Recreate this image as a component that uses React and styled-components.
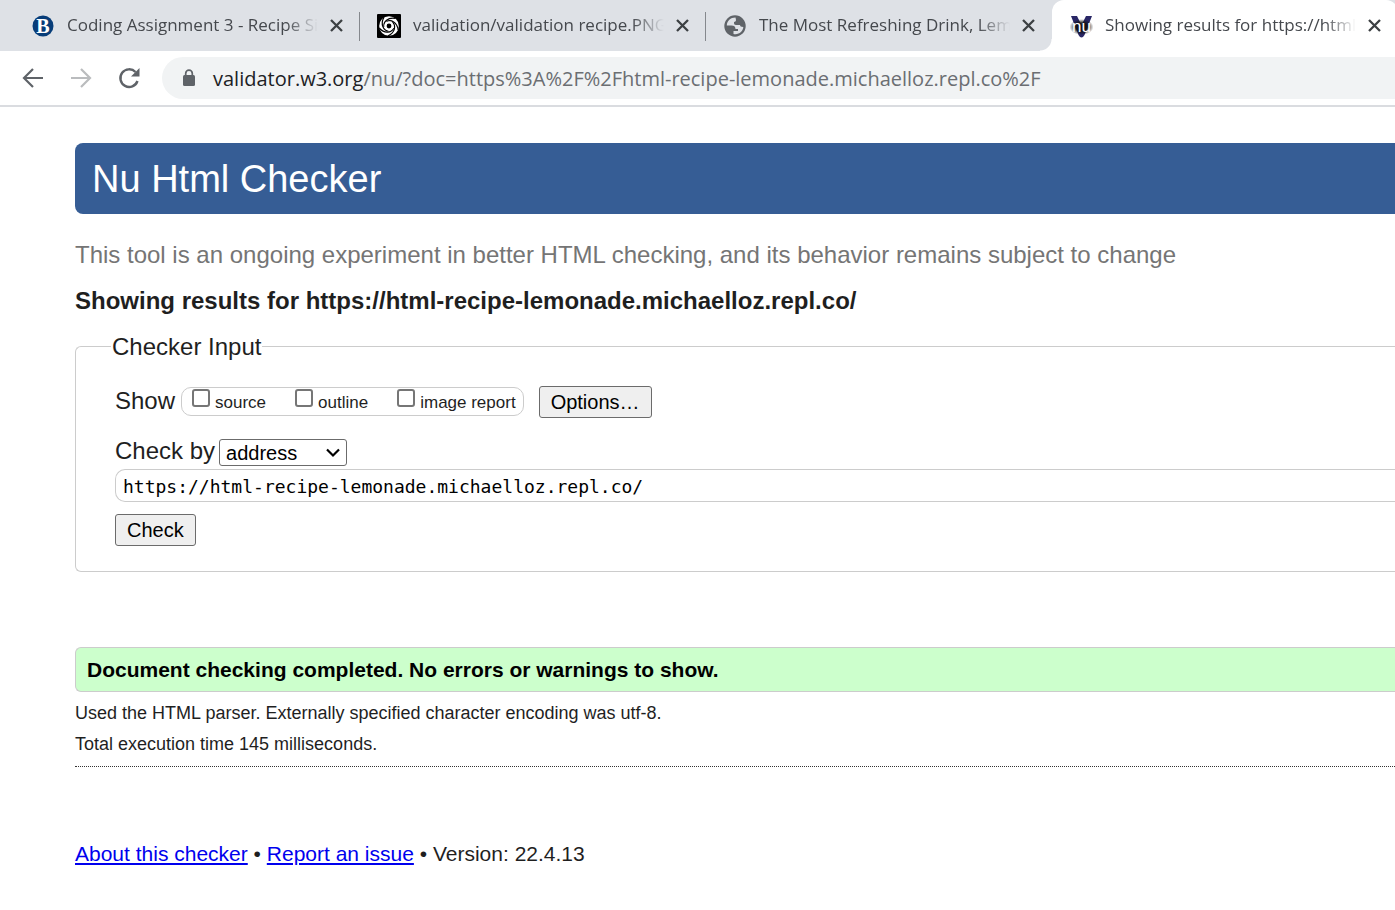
import React from "react";
import styled, { createGlobalStyle, css } from "styled-components";

const sans = `"Liberation Sans", Arial, sans-serif`;
const ui = `"Open Sans", "Noto Sans", sans-serif`;

const GlobalStyle = createGlobalStyle`
  *, *::before, *::after { box-sizing: border-box; }
  body { margin: 0; background: #fff; color: #1f1f1f; font: 24px/30px ${sans}; overflow-x: hidden; }
  h1, h2, p { margin: 0; }
`;

const TabStrip = styled.nav`
  display: flex;
  height: 51px;
  padding-left: 14px;
  background: #dee1e6;
  overflow: hidden;
`;
const Tab = styled.div`
  position: relative;
  flex: none;
  width: 346px;
  display: flex;
  align-items: center;
  padding: 0 16px 0 17px;
  ${(p) =>
    p.$separated &&
    css`
      &::after { content: ""; position: absolute; right: 0; top: 12px; width: 1px; height: 29px; background: #85888d; }
    `}
  ${(p) =>
    p.$active &&
    css`
      background: #fff;
      border-radius: 12px 12px 0 0;
      &::before {
        content: ""; position: absolute; left: -12px; bottom: 0; width: 12px; height: 12px;
        background: radial-gradient(circle at 0 0, transparent 11px, #fff 12px);
      }
    `}
`;
const Favicon = styled.svg`
  flex: none;
  width: 24px;
  height: 24px;
  margin-right: 12px;
`;
const TabTitle = styled.span`
  flex: 1;
  min-width: 0;
  padding-bottom: 2px;
  overflow: hidden;
  white-space: nowrap;
  font: 17px/28px ${ui};
  color: #45484d;
  mask-image: linear-gradient(to right, #000 calc(100% - 32px), transparent);
`;
const CloseButton = styled.button`
  display: flex;
  margin: 0 0 0 11px;
  padding: 0;
  border: 0;
  background: none;
  color: #3c4043;
`;

const Toolbar = styled.div`
  display: flex;
  align-items: center;
  height: 56px;
  padding-left: 19px;
  border-bottom: 2px solid #dadce0;
`;
const NavButton = styled.button`
  display: flex;
  flex: none;
  width: 28px;
  height: 28px;
  margin-right: 20px;
  padding: 0;
  border: 0;
  background: none;
  color: ${(p) => (p.disabled ? "#babcbe" : "#5f6368")};
  &:last-of-type { margin-right: 19px; }
`;
const AddressBar = styled.div`
  flex: 1;
  min-width: 0;
  display: flex;
  align-items: center;
  height: 42px;
  padding-left: 19px;
  border-radius: 21px 0 0 21px;
  background: #f1f3f4;
`;
const Url = styled.span`
  margin-left: 16px;
  padding-top: 2px;
  font: 20px/28px ${ui};
  white-space: nowrap;
  color: #6b6e72;
`;
const Host = styled.span`
  color: #202124;
`;

const Page = styled.main`
  padding: 36px 0 40px 75px;
`;
const Banner = styled.h1`
  padding: 15px 17px 13px;
  border-radius: 8px 0 0 8px;
  background: #365d95;
  color: #fff;
  font-size: 38px;
  font-weight: 400;
  line-height: 43px;
`;
const Intro = styled.p`
  margin-top: 26px;
  color: #757575;
`;
const ResultsFor = styled.h2`
  margin-top: 16px;
  font-size: 24px;
  line-height: 30px;
`;
const InputPanel = styled.fieldset`
  min-width: 0;
  margin: 16px 0 0;
  padding: 25px 0 25px 39px;
  border: 1px solid #ccc;
  border-right: 0;
  border-radius: 6px 0 0 6px;
`;
const Legend = styled.legend`
  margin-left: -4px;
  padding: 0 1px;
  line-height: 29px;
`;
const ShowRow = styled.div`
  display: flex;
  align-items: flex-start;
`;
const ShowOptions = styled.div`
  display: flex;
  gap: 29px;
  height: 29px;
  margin: 1px 15px 0 6px;
  padding: 0 7px 0 10px;
  border: 1px solid #ccc;
  border-radius: 10px;
`;
const Option = styled.label`
  display: flex;
  gap: 5px;
  font-size: 17px;
  line-height: 29px;
`;
const Checkbox = styled.input`
  appearance: none;
  width: 18px;
  height: 18px;
  margin: 1px 0 0;
  border: 2px solid #767676;
  border-radius: 3px;
  background: #fff;
`;
const Button = styled.button`
  height: 32px;
  padding: 0 11px;
  border: 1px solid #6b6b6b;
  border-radius: 3px;
  background: #efefef;
  color: #000;
  font: 20px/28px ${sans};
`;
const MethodRow = styled.div`
  display: flex;
  align-items: flex-end;
  margin-top: 18px;
`;
const SelectWrap = styled.span`
  position: relative;
  display: flex;
  margin-left: 4px;
`;
const Select = styled.select`
  appearance: none;
  width: 128px;
  height: 27px;
  padding: 0 6px;
  border: 1px solid #6b6b6b;
  border-radius: 3px;
  background: #fff;
  color: #000;
  font: 20px/24px ${sans};
`;
const Chevron = styled.svg`
  position: absolute;
  right: 7px;
  top: 9px;
  pointer-events: none;
`;
const AddressInput = styled.input`
  display: block;
  width: 100%;
  height: 33px;
  margin: 3px 0 12px;
  padding: 2px 7px 0;
  border: 1px solid #ccc;
  border-right: 0;
  border-radius: 10px 0 0 10px;
  color: #000;
  font: 18px/28px "DejaVu Sans Mono", monospace;
`;
const Success = styled.p`
  margin-top: 75px;
  padding: 8px 11px 7px;
  border: 1px solid #ccc;
  border-right: 0;
  border-radius: 6px 0 0 6px;
  background: #cfc;
  color: #000;
  font-size: 21px;
  font-weight: 700;
  line-height: 28px;
`;
const Details = styled.div`
  padding: 6px 0;
  border-bottom: 1px dotted #333;
  font-size: 18px;
  line-height: 31px;
`;
const Footer = styled.footer`
  margin-top: 72px;
  font-size: 21px;
`;
const Link = styled.a`
  color: #00e;
  text-underline-offset: 2px;
`;

const BIcon = () => (
  <Favicon viewBox="0 0 24 24" aria-hidden="true">
    <circle cx="12" cy="12" r="10.5" fill="#073d79" />
    <text x="12" y="19" textAnchor="middle" fontFamily="Liberation Serif, serif" fontWeight="700" fontSize="20" fill="#fff">B</text>
  </Favicon>
);
const SwirlIcon = () => (
  <Favicon viewBox="0 0 24 24" aria-hidden="true">
    <rect width="24" height="24" rx="1" fill="#000" />
    <circle cx="12" cy="12" r="9.8" fill="#fff" />
    <g fill="none" stroke="#000">
      {[0, 72, 144, 216, 288].map((a) => (
        <path key={a} d="M7 13C6 8 11 3 18.500 4.500" strokeWidth="1.200" transform={`rotate(${a} 12 12)`} />
      ))}
    </g>
    <circle cx="12" cy="12" r="3.500" fill="#000" stroke="#fff" strokeWidth="2.200" />
  </Favicon>
);
const GlobeIcon = () => (
  <Favicon viewBox="0 0 24 24" aria-hidden="true">
    <circle cx="12" cy="12" r="10.7" fill="#5f6368" />
    <path d="M12.500 3.500C7.500 3.500 4 7 3.800 11.500H8.500C11 11.500 12.500 12.500 12.500 15H15V17H10.500V20C16 21 20 17.500 20.300 13C18 13 17 12 17 11H13C11.500 11 11 10 11 9V8C12 8 13 7 13 6Z" fill="#dee1e6" />
  </Favicon>
);
const NuIcon = () => (
  <Favicon viewBox="0 0 24 24" aria-hidden="true">
    <defs>
      <radialGradient id="nu-shade">
        <stop offset="0.5" stopColor="#111" stopOpacity="0.9" />
        <stop offset="1" stopColor="#111" stopOpacity="0" />
      </radialGradient>
    </defs>
    <path d="M2 2H8L12.500 11L17 2H23L15.500 21Q12.500 26 9.500 21Z" fill="#292766" />
    <ellipse cx="12.500" cy="13" rx="12" ry="8" fill="url(#nu-shade)" />
    <text x="12.500" y="17.500" textAnchor="middle" fontFamily="Liberation Sans, sans-serif" fontSize="17" fill="#fff">nu</text>
  </Favicon>
);

const tabs = [
  { title: "Coding Assignment 3 - Recipe Site", Icon: BIcon, separated: true },
  { title: "validation/validation recipe.PNG", Icon: SwirlIcon, separated: true },
  { title: "The Most Refreshing Drink, Lemonade", Icon: GlobeIcon },
  { title: "Showing results for https://html", Icon: NuIcon, active: true },
];

export default function App() {
  return (
    <>
      <GlobalStyle />
      <TabStrip aria-label="Tabs">
        {tabs.map(({ title, Icon, separated, active }) => (
          <Tab key={title} $separated={separated} $active={active}>
            <Icon />
            <TabTitle>{title}</TabTitle>
            <CloseButton aria-label="Close tab">
              <svg width="15" height="15" viewBox="0 0 15 15" fill="none" stroke="currentColor" strokeWidth="2.300">
                <path d="M2 2L13 13M13 2L2 13" />
              </svg>
            </CloseButton>
          </Tab>
        ))}
      </TabStrip>
      <Toolbar>
        <NavButton aria-label="Back">
          <svg width="28" height="28" viewBox="0 0 28 28" fill="none" stroke="currentColor" strokeWidth="2.200">
            <path d="M24 14H5M14 5L5 14L14 23" />
          </svg>
        </NavButton>
        <NavButton aria-label="Forward" disabled>
          <svg width="28" height="28" viewBox="0 0 28 28" fill="none" stroke="currentColor" strokeWidth="2.200">
            <path d="M4 14H23M14 5L23 14L14 23" />
          </svg>
        </NavButton>
        <NavButton aria-label="Reload">
          <svg width="28" height="28" viewBox="0 0 28 28" fill="none" stroke="currentColor" strokeWidth="2.400">
            <path d="M22.500 17A8.800 8.800 0 1 1 20.500 8" />
            <path d="M24.500 4V12.500H16Z" fill="currentColor" stroke="none" />
          </svg>
        </NavButton>
        <AddressBar>
          <svg width="16" height="20" viewBox="0 0 16 20" aria-hidden="true">
            <rect x="2" y="7" width="12" height="11" rx="1.500" fill="#5f6368" />
            <path d="M4.700 8V5.500A3.300 3.300 0 0 1 11.300 5.500V8" fill="none" stroke="#5f6368" strokeWidth="1.700" />
          </svg>
          <Url>
            <Host>validator.w3.org</Host>/nu/?doc=https%3A%2F%2Fhtml-recipe-lemonade.michaelloz.repl.co%2F
          </Url>
        </AddressBar>
      </Toolbar>
      <Page>
        <Banner>Nu Html Checker</Banner>
        <Intro>This tool is an ongoing experiment in better HTML checking, and its behavior remains subject to change</Intro>
        <ResultsFor>Showing results for https://html-recipe-lemonade.michaelloz.repl.co/</ResultsFor>
        <InputPanel>
          <Legend>Checker Input</Legend>
          <ShowRow>
            <span>Show</span>
            <ShowOptions>
              {["source", "outline", "image report"].map((name) => (
                <Option key={name}>
                  <Checkbox type="checkbox" />
                  {name}
                </Option>
              ))}
            </ShowOptions>
            <Button type="button">Options…</Button>
          </ShowRow>
          <MethodRow>
            <label htmlFor="method">Check by</label>
            <SelectWrap>
              <Select id="method" defaultValue="address">
                <option value="address">address</option>
              </Select>
              <Chevron width="14" height="10" viewBox="0 0 14 10" fill="none" stroke="#000" strokeWidth="2.200">
                <path d="M1 1.500L7 7.500L13 1.500" />
              </Chevron>
            </SelectWrap>
          </MethodRow>
          <AddressInput aria-label="Address" defaultValue="https://html-recipe-lemonade.michaelloz.repl.co/" />
          <Button type="button">Check</Button>
        </InputPanel>
        <Success>Document checking completed. No errors or warnings to show.</Success>
        <Details>
          <p>Used the HTML parser. Externally specified character encoding was utf-8.</p>
          <p>Total execution time 145 milliseconds.</p>
        </Details>
        <Footer>
          <Link href="#about">About this checker</Link> • <Link href="#issue">Report an issue</Link> • Version: 22.4.13
        </Footer>
      </Page>
    </>
  );
}
